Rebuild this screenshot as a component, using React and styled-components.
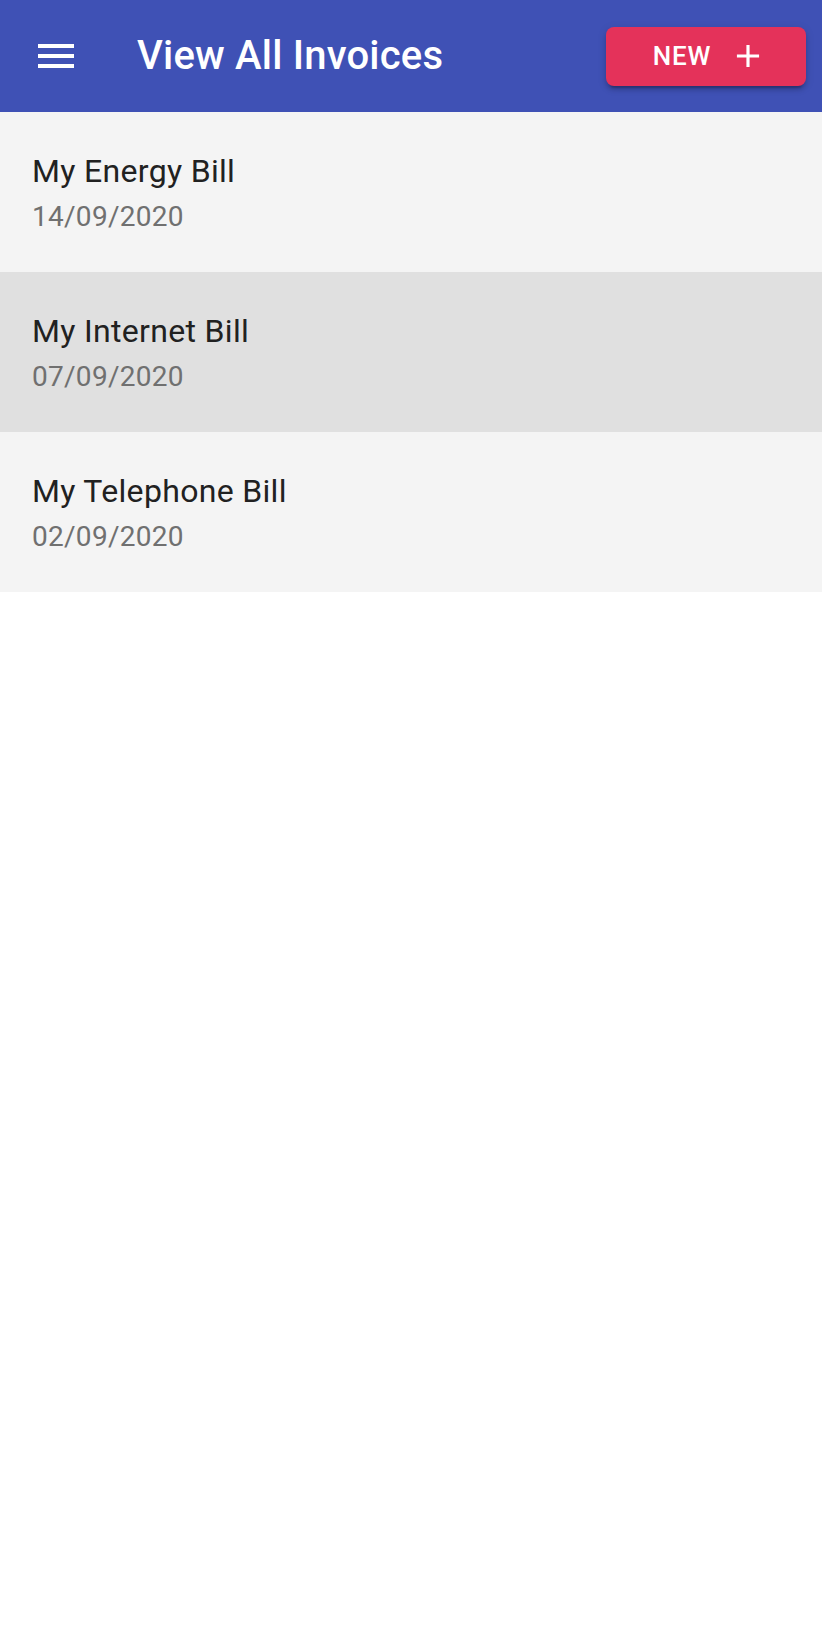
import React from 'react';
import styled, { createGlobalStyle } from 'styled-components';

const invoices = [
  { id: 1, name: 'My Energy Bill', date: '14/09/2020' },
  { id: 2, name: 'My Internet Bill', date: '07/09/2020', selected: true },
  { id: 3, name: 'My Telephone Bill', date: '02/09/2020' },
];

export default function App() {
  return (
    <>
      <GlobalStyle />
      <Page>
        <AppBar>
          <MenuButton aria-label="menu">
            <svg width="48" height="48" viewBox="0 0 24 24" fill="#fff">
              <path d="M3 18h18v-2H3v2zm0-5h18v-2H3v2zm0-7v2h18V6H3z" />
            </svg>
          </MenuButton>
          <Title>View All Invoices</Title>
          <NewButton>
            NEW
            <svg width="38" height="38" viewBox="0 0 24 24" fill="#fff">
              <path d="M19 13h-6v6h-2v-6H5v-2h6V5h2v6h6v2z" />
            </svg>
          </NewButton>
        </AppBar>
        <List>
          {invoices.map((item) => (
            <Row key={item.id} selected={item.selected}>
              <Name>{item.name}</Name>
              <DateText>{item.date}</DateText>
            </Row>
          ))}
        </List>
      </Page>
    </>
  );
}

const GlobalStyle = createGlobalStyle`
  body {
    margin: 0;
    background: #fff;
    font-family: Roboto, 'Noto Sans', sans-serif;
  }
`;

const Page = styled.div`
  width: 100%;
  min-height: 1646px;
  background: #fff;
`;

const AppBar = styled.header`
  height: 112px;
  display: flex;
  align-items: center;
  padding: 0 16px 0 32px;
  box-sizing: border-box;
  background: #3f51b5;
  color: #fff;
`;

const MenuButton = styled.button`
  width: 48px;
  height: 48px;
  padding: 0;
  border: none;
  background: none;
  display: flex;
  cursor: pointer;
`;

const Title = styled.h1`
  margin: 0 0 0 57px;
  flex: 1;
  font-size: 40px;
  font-weight: 500;
  line-height: 1.6;
  letter-spacing: 0.005em;
`;

const NewButton = styled.button`
  width: 200px;
  height: 59px;
  display: flex;
  align-items: center;
  justify-content: center;
  gap: 18px;
  padding: 0 0 0 8px;
  border: none;
  border-radius: 8px;
  background: #e4325a;
  color: #fff;
  font-family: Roboto, sans-serif;
  font-size: 26px;
  font-weight: 500;
  letter-spacing: 0.03em;
  box-shadow: 0 6px 2px -4px rgba(0, 0, 0, 0.2), 0 4px 4px 0 rgba(0, 0, 0, 0.14),
    0 2px 10px 0 rgba(0, 0, 0, 0.12);
  cursor: pointer;
`;

const List = styled.ul`
  list-style: none;
  margin: 0;
  padding: 0;
`;

const Row = styled.li`
  height: 160px;
  box-sizing: border-box;
  padding: 35px 32px;
  display: flex;
  flex-direction: column;
  background: ${(props) => (props.selected ? '#e0e0e0' : '#f4f4f4')};
`;

const Name = styled.span`
  font-size: 32px;
  line-height: 48px;
  color: #212121;
  letter-spacing: 0.01em;
`;

const DateText = styled.span`
  margin-top: 2px;
  font-size: 28px;
  line-height: 40px;
  color: #707070;
  letter-spacing: 0.01em;
`;
